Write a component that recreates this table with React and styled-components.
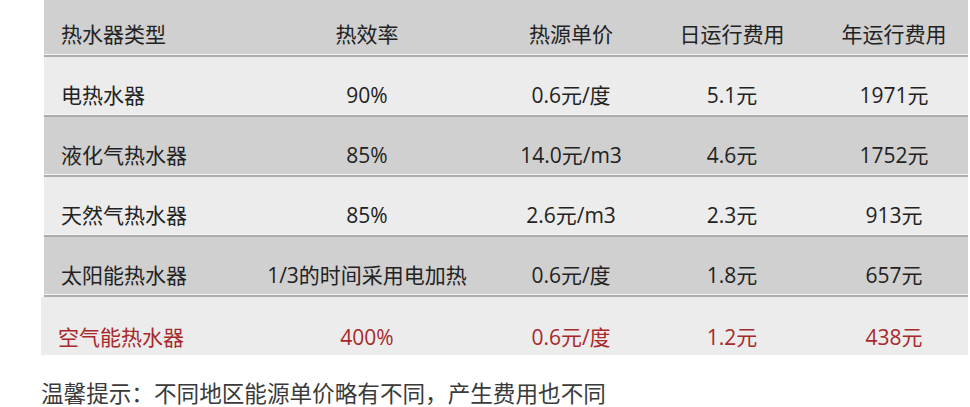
import styled, { createGlobalStyle } from "styled-components";

const GlobalStyle = createGlobalStyle`
  body {
    margin: 0;
    background: #ffffff;
    font-family: "Open Sans", "Noto Sans CJK SC", sans-serif;
  }
`;

const columns = ["热水器类型", "热效率", "热源单价", "日运行费用", "年运行费用"];

const rows = [
  ["电热水器", "90%", "0.6元/度", "5.1元", "1971元"],
  ["液化气热水器", "85%", "14.0元/m3", "4.6元", "1752元"],
  ["天然气热水器", "85%", "2.6元/m3", "2.3元", "913元"],
  ["太阳能热水器", "1/3的时间采用电加热", "0.6元/度", "1.8元", "657元"],
];

const highlight = ["空气能热水器", "400%", "0.6元/度", "1.2元", "438元"];

const App = () => {
  return (
    <>
      <GlobalStyle />
      <Wrapper>
        <Table>
          <Row $header>
            {columns.map((c, i) => (
              <Cell key={i} $first={i === 0}>{c}</Cell>
            ))}
          </Row>
          {rows.map((r, idx) => (
            <Row key={idx} $dark={idx % 2 === 1}>
              {r.map((c, i) => (
                <Cell key={i} $first={i === 0}>{c}</Cell>
              ))}
            </Row>
          ))}
          <Row $last>
            {highlight.map((c, i) => (
              <Cell key={i} $first={i === 0} $red>{c}</Cell>
            ))}
          </Row>
        </Table>
        <Note>温馨提示：不同地区能源单价略有不同，产生费用也不同</Note>
      </Wrapper>
    </>
  );
};

const Wrapper = styled.div`
  padding-left: 44px;
  width: 924px;
`;

const Table = styled.div`
  display: flex;
  flex-direction: column;
`;

const Row = styled.div`
  display: grid;
  grid-template-columns: ${(p) => (p.$last ? "195px" : "192px")} 262px 146px 176px 148px;
  align-items: end;
  margin-left: ${(p) => (p.$last ? "-3px" : "0")};
  padding-bottom: ${(p) => (p.$header ? "7px" : p.$last ? "4px" : "6px")};
  box-sizing: border-box;
  background: ${(p) => (p.$header || p.$dark ? "#d0d0d0" : "#ececec")};
  border-bottom: ${(p) => (p.$last ? "none" : "2px solid #ababab")};
  box-shadow: ${(p) => (p.$last ? "none" : "inset 0 -1px 0 #f6f6f6")};
  height: ${(p) => (p.$header ? "57px" : p.$last ? "58px" : "60px")};
`;

const Cell = styled.div`
  font-size: 21px;
  line-height: 27px;
  color: ${(p) => (p.$red ? "#a8292b" : "#222222")};
  text-align: ${(p) => (p.$first ? "left" : "center")};
  padding-left: ${(p) => (p.$first ? "17px" : "0")};
  white-space: nowrap;
`;

const Note = styled.div`
  margin-top: 24px;
  margin-left: -3px;
  font-size: 22.6px;
  line-height: 30px;
  color: #3a3a3a;
  white-space: nowrap;
`;

export default App;
